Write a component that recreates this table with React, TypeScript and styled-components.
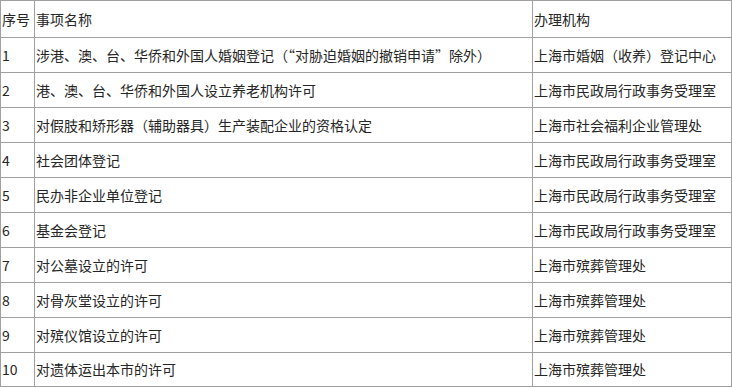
import React from "react";
import styled, { createGlobalStyle } from "styled-components";

const Global = createGlobalStyle`
  html, body { margin: 0; padding: 0; background: #ffffff; }
  body { font-family: "Noto Sans CJK SC", "Noto Sans", sans-serif; }
`;

const Table = styled.table`
  border-collapse: collapse;
  table-layout: fixed;
  width: 731px;
  border: 1px solid #3a3a3a;
  font-family: "Noto Sans CJK SC", "Noto Sans", sans-serif;
  font-size: 14px;
  color: #262626;
`;

const Row = styled.tr<{ $h: number }>`
  height: ${(p) => p.$h}px;
`;

const Cell = styled.td`
  border: 1px solid #a0a0a0;
  padding: 0 0 1px 1px;
  vertical-align: middle;
  white-space: nowrap;
  overflow: hidden;
  line-height: 18px;
`;

const rows: [string, string, string][] = [
  ["1", "涉港、澳、台、华侨和外国人婚姻登记（“对胁迫婚姻的撤销申请”除外）", "上海市婚姻（收养）登记中心"],
  ["2", "港、澳、台、华侨和外国人设立养老机构许可", "上海市民政局行政事务受理室"],
  ["3", "对假肢和矫形器（辅助器具）生产装配企业的资格认定", "上海市社会福利企业管理处"],
  ["4", "社会团体登记", "上海市民政局行政事务受理室"],
  ["5", "民办非企业单位登记", "上海市民政局行政事务受理室"],
  ["6", "基金会登记", "上海市民政局行政事务受理室"],
  ["7", "对公墓设立的许可", "上海市殡葬管理处"],
  ["8", "对骨灰堂设立的许可", "上海市殡葬管理处"],
  ["9", "对殡仪馆设立的许可", "上海市殡葬管理处"],
  ["10", "对遗体运出本市的许可", "上海市殡葬管理处"],
];

export default function App() {
  return (
    <>
      <Global />
      <Table>
        <colgroup>
          <col style={{ width: 34 }} />
          <col style={{ width: 498 }} />
          <col style={{ width: 199 }} />
        </colgroup>
        <tbody>
          <Row $h={37}>
            <Cell>序号</Cell>
            <Cell>事项名称</Cell>
            <Cell>办理机构</Cell>
          </Row>
          {rows.map(([n, name, org], i) => (
            <Row key={n} $h={i === rows.length - 1 ? 34 : 35}>
              <Cell>{n}</Cell>
              <Cell>{name}</Cell>
              <Cell>{org}</Cell>
            </Row>
          ))}
        </tbody>
      </Table>
    </>
  );
}
